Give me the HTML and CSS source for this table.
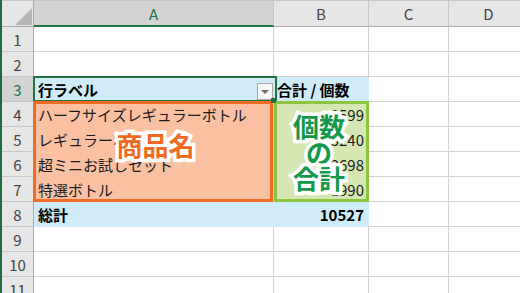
FILE: index.html
```html
<!DOCTYPE html>
<html lang="ja">
<head>
<meta charset="utf-8">
<title>ピボットテーブル</title>
<link rel="stylesheet" href="styles.css">
</head>
<body>
<div class="sheet">
  <div class="corner"></div>
  <div class="col-head sel">A</div>
  <div class="col-head">B</div>
  <div class="col-head">C</div>
  <div class="col-head">D</div>

  <div class="row-head">1</div>
  <div class="cell"></div><div class="cell"></div><div class="cell"></div><div class="cell"></div>

  <div class="row-head">2</div>
  <div class="cell"></div><div class="cell"></div><div class="cell"></div><div class="cell"></div>

  <div class="row-head sel">3</div>
  <div class="cell pv-head label-cell"><b>行ラベル</b><span class="filter"></span></div>
  <div class="cell pv-head"><b>合計 / 個数</b></div>
  <div class="cell"></div><div class="cell"></div>

  <div class="row-head">4</div>
  <div class="cell name">ハーフサイズレギュラーボトル</div>
  <div class="cell qty">2599</div>
  <div class="cell"></div><div class="cell"></div>

  <div class="row-head">5</div>
  <div class="cell name">レギュラーボトル</div>
  <div class="cell qty">3240</div>
  <div class="cell"></div><div class="cell"></div>

  <div class="row-head">6</div>
  <div class="cell name">超ミニお試しセット</div>
  <div class="cell qty">2698</div>
  <div class="cell"></div><div class="cell"></div>

  <div class="row-head">7</div>
  <div class="cell name">特選ボトル</div>
  <div class="cell qty">1990</div>
  <div class="cell"></div><div class="cell"></div>

  <div class="row-head">8</div>
  <div class="cell pv-total"><b>総計</b></div>
  <div class="cell pv-total num"><b>10527</b></div>
  <div class="cell"></div><div class="cell"></div>

  <div class="row-head">9</div>
  <div class="cell"></div><div class="cell"></div><div class="cell"></div><div class="cell"></div>

  <div class="row-head">10</div>
  <div class="cell"></div><div class="cell"></div><div class="cell"></div><div class="cell"></div>

  <div class="row-head">11</div>
  <div class="cell"></div><div class="cell"></div><div class="cell"></div><div class="cell"></div>

  <!-- active cell A3 -->
  <div class="active"></div>
  <div class="handle"></div>

  <!-- callout frames -->
  <div class="frame frame-name"><span class="tag tag-name">商品名</span></div>
  <div class="frame frame-qty"><span class="tag tag-qty">個数<br>の<br>合計</span></div>
</div>
</body>
</html>
```

FILE: styles.css
```css
* {
  box-sizing: border-box;
  margin: 0;
  padding: 0;
}

html,
body {
  width: 520px;
  height: 293px;
  overflow: hidden;
  background: #ffffff;
}

body {
  font-family: "Noto Sans CJK JP", "Noto Sans", sans-serif;
  font-size: 15px;
  color: #1c1c1c;
}

/* worksheet grid: row header + columns A..D */
.sheet {
  position: relative;
  display: grid;
  grid-template-columns: 32px 240px 95px 80px 80px;
  grid-template-rows: 27px repeat(11, 25px);
  height: 293px;
  border-left: 2px solid #1f6b40;
}

.corner {
  position: relative;
  background: #e6e6e6;
  border-top: 1px solid #c6c6c6;
  border-right: 1px solid #ababab;
  border-bottom: 1px solid #ababab;
}

.corner::after {
  content: "";
  position: absolute;
  left: 13px;
  top: 7px;
  width: 17px;
  height: 17px;
  background: #b5b5b5;
  clip-path: polygon(100% 0, 100% 100%, 0 100%);
}

.col-head {
  display: flex;
  align-items: center;
  justify-content: center;
  background: #e6e6e6;
  border-top: 1px solid #c6c6c6;
  border-right: 1px solid #c8c8c8;
  border-bottom: 1px solid #ababab;
  color: #444444;
  line-height: 1;
}

.col-head.sel {
  background: #d3d3d3;
  color: #217346;
  border-bottom: 2px solid #217346;
}

.row-head {
  display: flex;
  align-items: center;
  justify-content: center;
  background: #e6e6e6;
  border-right: 1px solid #ababab;
  border-bottom: 1px solid #c8c8c8;
  color: #444444;
  line-height: 1;
}

.row-head.sel {
  background: #d3d3d3;
  color: #217346;
}

.cell {
  display: flex;
  align-items: center;
  padding: 0 4px;
  white-space: nowrap;
  overflow: hidden;
  border-right: 1px solid #d4d4d4;
  border-bottom: 1px solid #d4d4d4;
  line-height: 1;
}

.cell b {
  font-weight: 700;
  color: #000000;
}

/* pivot table styling */
.pv-head,
.pv-total {
  background: #cfebf8;
  border-right-color: #cfebf8;
  border-bottom-color: #cfebf8;
}

.pv-head + .pv-head {
  padding-left: 3px;
}

.label-cell {
  justify-content: space-between;
  padding-right: 0;
}

.filter {
  display: flex;
  align-items: center;
  justify-content: center;
  width: 16px;
  height: 17px;
  margin-top: 4px;
  padding-top: 2px;
  background: #f7f7f7;
  border: 1px solid #a9a9a9;
}

.filter::after {
  content: "";
  border-left: 4px solid transparent;
  border-right: 4px solid transparent;
  border-top: 4px solid #6b6b6b;
}

.name {
  background: #f9c0a2;
  border-right-color: #f9c0a2;
  border-bottom-color: #f9c0a2;
}

.qty {
  justify-content: flex-end;
  background: #d5e8b3;
  border-right-color: #d5e8b3;
  border-bottom-color: #d5e8b3;
}

.num {
  justify-content: flex-end;
}

/* active cell outline on A3 */
.active {
  position: absolute;
  left: 31px;
  top: 76px;
  width: 244px;
  height: 26px;
  border: 2px solid #217346;
}

.handle {
  position: absolute;
  left: 269px;
  top: 98px;
  width: 5px;
  height: 5px;
  background: #217346;
  z-index: 3;
}

/* callout frames over the pivot body */
.frame {
  position: absolute;
  top: 101px;
  height: 101px;
  display: flex;
  align-items: center;
  justify-content: center;
  z-index: 2;
}

.frame-name {
  left: 31px;
  width: 240px;
  border: 3px solid #f26b22;
  padding: 0 0 13px 5px;
}

.frame-qty {
  left: 272px;
  width: 95px;
  border: 3px solid #8cc63f;
  padding: 0 5px 0 0;
}

.tag {
  font-weight: 700;
  font-size: 26px;
  line-height: 26px;
  text-align: center;
  -webkit-text-stroke: 7px #ffffff;
  paint-order: stroke fill;
}

.tag-name {
  color: #f06a22;
}

.tag-qty {
  color: #14984a;
}
```
